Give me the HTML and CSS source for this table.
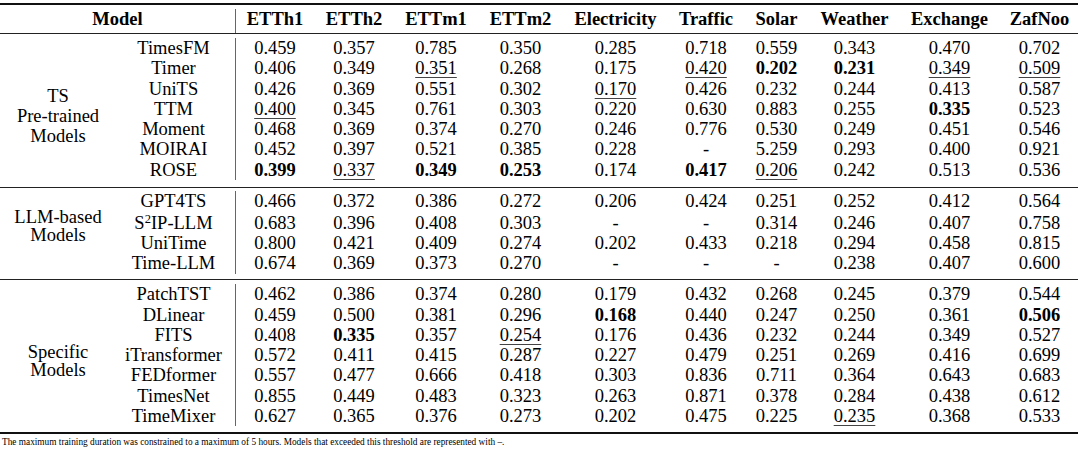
FILE: index.html
```html
<!DOCTYPE html>
<html lang="en">
<head>
<meta charset="utf-8">
<title>Results table</title>
<link rel="stylesheet" href="styles.css">
</head>
<body>
<div class="tbl">
  <div class="head">
    <div class="hcell hmodel">Model</div>
    <div class="hcell">ETTh1</div>
    <div class="hcell">ETTh2</div>
    <div class="hcell">ETTm1</div>
    <div class="hcell">ETTm2</div>
    <div class="hcell">Electricity</div>
    <div class="hcell">Traffic</div>
    <div class="hcell">Solar</div>
    <div class="hcell">Weather</div>
    <div class="hcell">Exchange</div>
    <div class="hcell">ZafNoo</div>
  </div>

  <div class="group g1">
    <div class="glabel lab1"><span>TS</span><span>Pre-trained</span><span>Models</span></div>
    <div class="rows">
      <div class="row"><div class="name">TimesFM</div><div>0.459</div><div>0.357</div><div>0.785</div><div>0.350</div><div>0.285</div><div>0.718</div><div>0.559</div><div>0.343</div><div>0.470</div><div>0.702</div></div>
      <div class="row"><div class="name">Timer</div><div>0.406</div><div>0.349</div><div><u>0.351</u></div><div>0.268</div><div>0.175</div><div><u>0.420</u></div><div><b>0.202</b></div><div><b>0.231</b></div><div><u>0.349</u></div><div><u>0.509</u></div></div>
      <div class="row"><div class="name">UniTS</div><div>0.426</div><div>0.369</div><div>0.551</div><div>0.302</div><div><u>0.170</u></div><div>0.426</div><div>0.232</div><div>0.244</div><div>0.413</div><div>0.587</div></div>
      <div class="row"><div class="name">TTM</div><div><u>0.400</u></div><div>0.345</div><div>0.761</div><div>0.303</div><div>0.220</div><div>0.630</div><div>0.883</div><div>0.255</div><div><b>0.335</b></div><div>0.523</div></div>
      <div class="row"><div class="name">Moment</div><div>0.468</div><div>0.369</div><div>0.374</div><div>0.270</div><div>0.246</div><div>0.776</div><div>0.530</div><div>0.249</div><div>0.451</div><div>0.546</div></div>
      <div class="row"><div class="name">MOIRAI</div><div>0.452</div><div>0.397</div><div>0.521</div><div>0.385</div><div>0.228</div><div>-</div><div>5.259</div><div>0.293</div><div>0.400</div><div>0.921</div></div>
      <div class="row"><div class="name">ROSE</div><div><b>0.399</b></div><div><u>0.337</u></div><div><b>0.349</b></div><div><b>0.253</b></div><div>0.174</div><div><b>0.417</b></div><div><u>0.206</u></div><div>0.242</div><div>0.513</div><div>0.536</div></div>
    </div>
  </div>

  <div class="group g2">
    <div class="glabel lab2"><span>LLM-based</span><span>Models</span></div>
    <div class="rows">
      <div class="row"><div class="name">GPT4TS</div><div>0.466</div><div>0.372</div><div>0.386</div><div>0.272</div><div>0.206</div><div>0.424</div><div>0.251</div><div>0.252</div><div>0.412</div><div>0.564</div></div>
      <div class="row tall"><div class="name">S<sup>2</sup>IP-LLM</div><div>0.683</div><div>0.396</div><div>0.408</div><div>0.303</div><div>-</div><div>-</div><div>0.314</div><div>0.246</div><div>0.407</div><div>0.758</div></div>
      <div class="row"><div class="name">UniTime</div><div>0.800</div><div>0.421</div><div>0.409</div><div>0.274</div><div>0.202</div><div>0.433</div><div>0.218</div><div>0.294</div><div>0.458</div><div>0.815</div></div>
      <div class="row"><div class="name">Time-LLM</div><div>0.674</div><div>0.369</div><div>0.373</div><div>0.270</div><div>-</div><div>-</div><div>-</div><div>0.238</div><div>0.407</div><div>0.600</div></div>
    </div>
  </div>

  <div class="group g3">
    <div class="glabel lab3"><span>Specific</span><span>Models</span></div>
    <div class="rows">
      <div class="row"><div class="name">PatchTST</div><div>0.462</div><div>0.386</div><div>0.374</div><div>0.280</div><div>0.179</div><div>0.432</div><div>0.268</div><div>0.245</div><div>0.379</div><div>0.544</div></div>
      <div class="row"><div class="name">DLinear</div><div>0.459</div><div>0.500</div><div>0.381</div><div>0.296</div><div><b>0.168</b></div><div>0.440</div><div>0.247</div><div>0.250</div><div>0.361</div><div><b>0.506</b></div></div>
      <div class="row"><div class="name">FITS</div><div>0.408</div><div><b>0.335</b></div><div>0.357</div><div><u>0.254</u></div><div>0.176</div><div>0.436</div><div>0.232</div><div>0.244</div><div>0.349</div><div>0.527</div></div>
      <div class="row"><div class="name">iTransformer</div><div>0.572</div><div>0.411</div><div>0.415</div><div>0.287</div><div>0.227</div><div>0.479</div><div>0.251</div><div>0.269</div><div>0.416</div><div>0.699</div></div>
      <div class="row"><div class="name">FEDformer</div><div>0.557</div><div>0.477</div><div>0.666</div><div>0.418</div><div>0.303</div><div>0.836</div><div>0.711</div><div>0.364</div><div>0.643</div><div>0.683</div></div>
      <div class="row"><div class="name">TimesNet</div><div>0.855</div><div>0.449</div><div>0.483</div><div>0.323</div><div>0.263</div><div>0.871</div><div>0.378</div><div>0.284</div><div>0.438</div><div>0.612</div></div>
      <div class="row"><div class="name">TimeMixer</div><div>0.627</div><div>0.365</div><div>0.376</div><div>0.273</div><div>0.202</div><div>0.475</div><div>0.225</div><div><u>0.235</u></div><div>0.368</div><div>0.533</div></div>
    </div>
  </div>
</div>
<p class="note">The maximum training duration was constrained to a maximum of 5 hours. Models that exceeded this threshold are represented with &ndash;.</p>
</body>
</html>
```

FILE: styles.css
```css
html, body {
  margin: 0;
  padding: 0;
  background: #fff;
}

body {
  font-family: "Liberation Serif", "Times New Roman", serif;
  color: #000;
}

.tbl {
  --cols: 78px 80px 84px 85px 105px 76px 65px 91px 99px 81px;
  width: 1078px;
  margin-top: 3px;
  border-top: 2px solid #111;
  border-bottom: 2px solid #111;
  font-size: 18.5px;
  line-height: 20.3px;
}

.head {
  display: grid;
  grid-template-columns: 236px var(--cols);
  padding-top: 4px;
  font-weight: bold;
  text-align: center;
}

.hcell {
  padding-bottom: 3.7px;
  white-space: nowrap;
}

.hmodel {
  border-right: 1px solid #666;
}

.group {
  display: flex;
  border-top: 1px solid #222;
}

.g1 { padding: 4px 0 6.5px; }
.g2 { padding: 3.5px 0 5.5px; }
.g3 { padding: 4px 0 5.6px; }

.glabel {
  width: 112px;
  flex: none;
  box-sizing: border-box;
  padding-left: 4px;
  display: flex;
  flex-direction: column;
  justify-content: center;
  align-items: center;
  text-align: center;
}

.lab1 { line-height: 20px; padding-top: 13px; }
.lab2 { line-height: 18.5px; padding-bottom: 12.4px; }
.lab3 { line-height: 18.5px; padding-top: 12px; }

.rows {
  display: flex;
  flex-direction: column;
}

.row {
  display: grid;
  grid-template-columns: 124px var(--cols);
  text-align: center;
  white-space: nowrap;
}

.row.tall {
  padding-top: 1.5px;
}

.name {
  border-right: 1px solid #666;
}

.row.tall .name {
  margin-top: -1.5px;
  padding-top: 1.5px;
}

sup {
  font-size: 0.68em;
  line-height: 0;
  vertical-align: 0.5em;
}

u {
  text-decoration: underline;
  text-decoration-thickness: 1px;
  text-underline-offset: 3px;
  text-decoration-color: #444;
}

b {
  font-weight: bold;
}

.note {
  margin: 3px 0 0 2px;
  font-size: 9.3px;
  line-height: 11px;
}
```
